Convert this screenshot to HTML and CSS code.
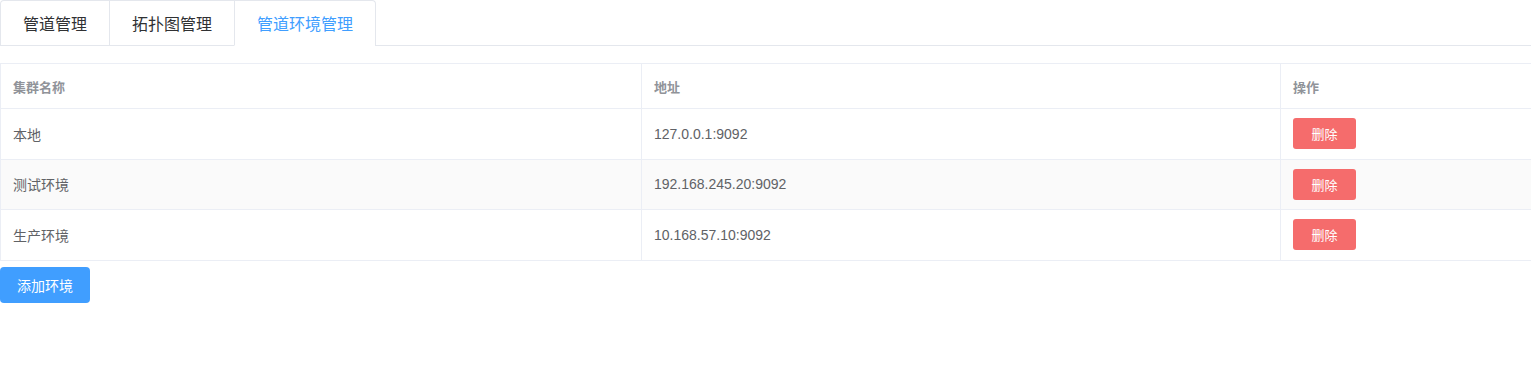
FILE: index.html
```html
<!DOCTYPE html>
<html lang="zh-CN">
<head>
    <meta charset="UTF-8">
    <meta name="viewport" content="width=device-width, initial-scale=1.0">
    <title>管道环境管理</title>
    <link rel="stylesheet" href="styles.css">
</head>
<body>
    <div id="main">
        <div class="tab-header">
            <div class="tab-nav">
                <div class="tab-item">管道管理</div>
                <div class="tab-item">拓扑图管理</div>
                <div class="tab-item active">管道环境管理</div>
            </div>
        </div>

        <table class="env-table">
            <colgroup>
                <col class="col-name">
                <col class="col-addr">
                <col class="col-op">
            </colgroup>
            <thead>
                <tr>
                    <th>集群名称</th>
                    <th>地址</th>
                    <th>操作</th>
                </tr>
            </thead>
            <tbody>
                <tr>
                    <td>本地</td>
                    <td>127.0.0.1:9092</td>
                    <td><button class="btn-delete">删除</button></td>
                </tr>
                <tr class="striped">
                    <td>测试环境</td>
                    <td>192.168.245.20:9092</td>
                    <td><button class="btn-delete">删除</button></td>
                </tr>
                <tr>
                    <td>生产环境</td>
                    <td>10.168.57.10:9092</td>
                    <td><button class="btn-delete">删除</button></td>
                </tr>
            </tbody>
        </table>

        <button class="btn-add">添加环境</button>
    </div>
</body>
</html>
```

FILE: styles.css
```css
body {
    font-family: "Helvetica Neue", Helvetica, "Liberation Sans", "Noto Sans CJK SC", sans-serif;
    background-color: #fff;
    margin: 0;
    padding: 0;
}

#main {
    width: 1531px;
}

/* tabs */
.tab-header {
    display: flex;
    border-bottom: 1px solid #e4e7ed;
    margin-bottom: 17px;
}

.tab-nav {
    display: flex;
    border: 1px solid #e4e7ed;
    border-bottom: none;
    border-radius: 4px 4px 0 0;
    margin-bottom: -1px;
}

.tab-item {
    height: 41px;
    line-height: 41px;
    padding: 3px 22px 0;
    font-size: 16px;
    color: #303133;
    border-left: 1px solid #e4e7ed;
    border-bottom: 1px solid #e4e7ed;
}

.tab-item:first-child {
    border-left: none;
}

.tab-item.active {
    color: #409eff;
    border-bottom-color: #fff;
}

/* table */
.env-table {
    width: 1532px;
    border-collapse: collapse;
    border: 1px solid #ebeef5;
    table-layout: fixed;
}

.col-name { width: 641px; }
.col-addr { width: 639px; }
.col-op { width: 252px; }

.env-table th,
.env-table td {
    border: 1px solid #ebeef5;
    padding: 0 12px;
    text-align: left;
}

.env-table th {
    height: 44px;
    font-size: 13px;
    font-weight: bold;
    color: #909399;
}

.env-table td {
    height: 49.6px;
    font-size: 14px;
    color: #606266;
}

.env-table tr.striped td {
    background-color: #fafafa;
}

.btn-delete {
    display: block;
    width: 63px;
    height: 31px;
    padding: 0;
    border: none;
    border-radius: 3px;
    background-color: #f56c6c;
    color: #fff;
    font-family: inherit;
    font-size: 13px;
    cursor: pointer;
}

.btn-add {
    display: block;
    margin-top: 6px;
    width: 90px;
    height: 36px;
    padding: 0;
    border: none;
    border-radius: 4px;
    background-color: #409eff;
    color: #fff;
    font-family: inherit;
    font-size: 14px;
    cursor: pointer;
}
```
